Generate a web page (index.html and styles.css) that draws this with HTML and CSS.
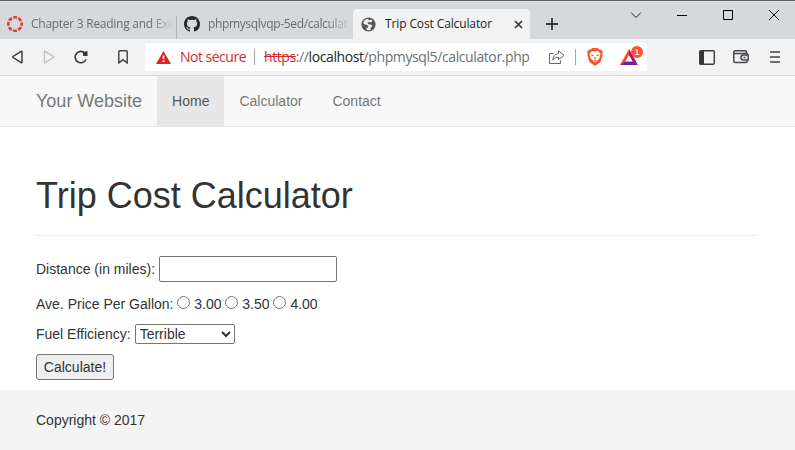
FILE: index.html
```html
<!DOCTYPE html>
<html lang="en">
<head>
<meta charset="utf-8">
<title>Trip Cost Calculator</title>
<link rel="stylesheet" href="styles.css">
</head>
<body>
<header class="browser">
  <div class="tabs">
    <div class="tab tab-first">
      <svg width="16" height="16" viewBox="0 0 16 16"><circle cx="8" cy="8" r="6.7" fill="none" stroke="#e33a32" stroke-width="2.5" stroke-dasharray="3.9 1.362" stroke-dashoffset="1.95"/></svg>
      <span class="tab-title fade t1">Chapter 3 Reading and Exe</span>
    </div>
    <div class="tab tab-second">
      <svg width="16" height="16" viewBox="0 0 16 16" fill="#24292e"><path d="M8 0C3.58 0 0 3.58 0 8c0 3.54 2.29 6.53 5.47 7.59.4.07.55-.17.55-.38 0-.19-.01-.82-.01-1.49-2.01.37-2.53-.49-2.69-.94-.09-.23-.48-.94-.82-1.13-.28-.15-.68-.52-.01-.53.63-.01 1.08.58 1.23.82.72 1.21 1.87.87 2.33.66.07-.52.28-.87.51-1.07-1.78-.2-3.64-.89-3.64-3.95 0-.87.31-1.59.82-2.15-.08-.2-.36-1.02.08-2.12 0 0 .67-.21 2.2.82.64-.18 1.32-.27 2-.27s1.36.09 2 .27c1.53-1.04 2.2-.82 2.2-.82.44 1.1.16 1.92.08 2.12.51.56.82 1.27.82 2.15 0 3.07-1.87 3.75-3.65 3.95.29.25.54.73.54 1.48 0 1.07-.01 1.93-.01 2.2 0 .21.15.46.55.38A8.01 8.01 0 0 0 16 8c0-4.42-3.58-8-8-8z"/></svg>
      <span class="tab-title fade t2">phpmysqlvqp-5ed/calculat</span>
    </div>
    <div class="tab tab-active">
      <svg width="15" height="15" viewBox="0 0 15 15"><circle cx="7.5" cy="7.5" r="7.1" fill="#55595e"/><path d="M7.200 1.800C5 2 3 3.300 2.200 5.400l1 1.900 2.700.4 1.600 1.600-.6 1.500-1.900.2 1.500 2.200c1.100.2 2.200 0 3.200-.5l-.4-1.600 2-1.800-.8-1.500-3-.6-1.200-1.300 1.600-.9 2.700.2.7-1.700-1.700-1.100-.8.900-1.200-.2Z" fill="#f2f2f2"/></svg>
      <span class="tab-title t3">Trip Cost Calculator</span>
      <svg class="tab-close" width="9" height="9" viewBox="0 0 9 9"><path d="m1 1 7 7M8 1 1 8" stroke="#33373b" stroke-width="1.7"/></svg>
    </div>
    <svg class="new-tab" width="12" height="12" viewBox="0 0 12 12"><path d="M6 0v12M0 6h12" stroke="#33373b" stroke-width="1.8"/></svg>
    <div class="window-buttons">
      <svg width="12" height="12" viewBox="0 0 12 12"><path d="m1 3.5 5 5 5-5" fill="none" stroke="#222"/></svg>
      <svg width="12" height="12" viewBox="0 0 12 12"><path d="M1 6.5h10" stroke="#000"/></svg>
      <svg width="12" height="12" viewBox="0 0 12 12"><path d="M1.500 1.500h9v9h-9z" fill="none" stroke="#000"/></svg>
      <svg width="12" height="12" viewBox="0 0 12 12"><path d="m1 1 10 10M11 1 1 11" stroke="#111"/></svg>
    </div>
  </div>

  <div class="toolbar">
    <div class="nav-icons">
      <svg width="14" height="14" viewBox="0 0 14 14"><path d="M10.200 1.300 2 6.500q-.8.500 0 1l8.200 5.200q.8.300.8-.6V1.900q0-.9-.8-.6Z" fill="none" stroke="#33373b" stroke-width="1.400"/></svg>
      <svg width="14" height="14" viewBox="0 0 14 14"><path d="M2.200 1.300 10.400 6.500q.8.500 0 1l-8.200 5.200q-.8.300-.8-.6V1.900q0-.9.8-.6Z" fill="none" stroke="#bdbfc1" stroke-width="1.400"/></svg>
      <svg width="14" height="14" viewBox="0 0 14 14"><path d="M11 3.200A5.700 5.700 0 1 0 12 9.500" fill="none" stroke="#33373b" stroke-width="1.600"/><path d="M9 2.300 13.500 1v5H9.200Z" fill="#33373b"/></svg>
      <svg width="14" height="14" viewBox="0 0 14 14"><path d="M1.800 1.600q0-.8.8-.8h6.800q.8 0 .8.800v11.300L6 9.800l-4.200 3.100Z" fill="none" stroke="#45494d" stroke-width="1.500"/></svg>
    </div>
    <div class="address">
      <svg class="warn" width="15" height="13" viewBox="0 0 15 13"><path d="M7.500 0 15 13H0Z" fill="#dc2626"/><path d="M6.700 4.500h1.600v3.500H6.700ZM6.700 9.300h1.600V11H6.700Z" fill="#fff"/></svg>
      <span class="security">Not secure</span>
      <span class="divider"></span>
      <span class="url"><span class="https">https</span>://<span class="host">localhost</span>/phpmysql5/calculator.php</span>
      <svg class="share" width="16" height="16" viewBox="0 0 16 16" fill="none" stroke="#666" stroke-width="1"><path d="M4.500 4.500h-4v10h11v-3"/><path d="M9.500 1.800 15 6.500l-5.500 4.200V8.200C6.800 8.100 5 9 3.800 11.200 4 7.500 5.800 4.900 9.500 4.500Z"/></svg>
      <span class="divider divider-share"></span>
      <svg class="brave" width="16" height="18" viewBox="0 0 16 18"><path d="M4 1.500 5.300 0h5.400L12 1.500l2-.1L16 4l-.7 2 .2 1.500-2 6.500L8 18l-5.500-4L.5 7.500.7 6 0 4l2-2.600Z" fill="#fb542b"/><path d="m5 3 3 .6L11 3l2.600 3-.8 2.200.2 1-2 2.500L8 14.500l-3-2.800-2-2.500.2-1L2.400 6Z" fill="#fff"/><path d="m4 6.300 2.700.7-.7 1.300-1.700-.8ZM12 6.300l-2.700.7.7 1.300 1.700-.8ZM6.300 9.800 8 9.200l1.700.6L8 11ZM6.300 12.200l1.700-.6 1.700.6L8 13.300Z" fill="#fb542b"/></svg>
      <span class="rewards">
        <svg width="18" height="16" viewBox="0 0 18 16"><path d="M9 0 0 16l5-3 4-7Z" fill="#ff4a2c"/><path d="m9 0 9 16-5-3-4-7Z" fill="#a3127d"/><path d="M0 16h18l-5-3.500H5Z" fill="#6c24a1"/></svg>
        <span class="badge">1</span>
      </span>
    </div>
    <div class="side-icons">
      <svg width="16" height="15" viewBox="0 0 16 15"><rect x=".7" y=".7" width="14.600" height="13.600" rx="1" fill="none" stroke="#3b3f43" stroke-width="1.400"/><path d="M1 1h4v13H1Z" fill="#33373b"/></svg>
      <svg width="16" height="14" viewBox="0 0 16 14" fill="none" stroke="#45494d" stroke-width="1.500"><path d="M14.200 5V3.600H2.500Q.8 3.500.8 2.200T2.500.8h9.700q1.200 0 1.200 1v1.400M.8 2v9q0 1.500 1.700 1.500h10.200q1.500 0 1.500-1.500v-1"/><path d="M15.200 5H10.500a2.500 2.500 0 0 0 0 5h4.700ZM10.500 7.500h2"/></svg>
      <svg width="10" height="12" viewBox="0 0 10 12"><path d="M0 1h10M0 6h10M0 11h10" stroke="#44484c" stroke-width="1.700"/></svg>
    </div>
  </div>
</header>

<nav class="navbar">
  <a class="brand">Your Website</a>
  <a class="nav-link current">Home</a>
  <a class="nav-link">Calculator</a>
  <a class="nav-link">Contact</a>
</nav>

<main class="content">
  <h1>Trip Cost Calculator</h1>
  <form>
    <p class="row distance"><label for="distance">Distance (in miles):</label><input id="distance" type="text"></p>
    <p class="row price"><span>Ave. Price Per Gallon:</span>
      <label><input type="radio" name="price"><span>3.00</span></label>
      <label><input type="radio" name="price"><span>3.50</span></label>
      <label><input type="radio" name="price"><span>4.00</span></label>
    </p>
    <p class="row efficiency"><label for="eff">Fuel Efficiency:</label><select id="eff"><option>Terrible</option></select></p>
    <button type="button">Calculate!</button>
  </form>
</main>
<footer>Copyright © 2017</footer>
</body>
</html>
```
FILE: styles.css
```css
* { box-sizing: border-box; }
body {
  margin: 0;
  height: 450px;
  display: flex;
  flex-direction: column;
  overflow: hidden;
  background: #fff;
  color: #333;
  font: 14px/20px "Liberation Sans", Arial, sans-serif;
}
svg { display: block; flex: none; }

/* Browser frame */
.browser { font-family: "Open Sans", "Noto Sans", sans-serif; height: 76px; flex: none; }
.tabs {
  height: 39px;
  display: flex;
  align-items: flex-end;
  background: #d5d9dc;
  border-top: 1px solid #606266;
}
.tab { display: flex; align-items: center; height: 30px; gap: 8px; color: #686d73; font-size: 12px; }
.tab-title { white-space: nowrap; line-height: 18px; }
.fade { mask-image: linear-gradient(to right, #000 calc(100% - 24px), transparent); }
.tab-first { width: 177px; height: 23px; padding: 0 0 7px 7px; border-right: 1px solid #aeb2b5; }
.tab-second { width: 176px; height: 23px; padding: 0 0 7px 7px; }
.t1 { width: 143px; letter-spacing: -.27px; }
.t2 { width: 143px; letter-spacing: -.34px; }
.tab-active { width: 177px; padding: 0 0 0 8px; border-radius: 4px 4px 0 0; background: #f2f2f2; color: #202428; gap: 9px; }
.t3 { width: 120px; letter-spacing: -.12px; }
.new-tab { margin: 0 0 9px 16px; }
.window-buttons { margin-left: auto; margin-right: 15px; display: flex; gap: 34px; align-self: flex-start; padding-top: 8px; }
.toolbar {
  height: 37px;
  display: flex;
  align-items: center;
  background: #f2f2f2;
  border-bottom: 1px solid #d3d6d9;
}
.nav-icons { display: grid; grid-template-columns: 32px 31px 43px 28px; width: 134px; margin-left: 11px; }
.address { width: 502px; height: 28px; display: flex; align-items: center; padding-left: 11px; border-radius: 3px; background: #fff; font-size: 14px; }
.security { width: 66px; margin-left: 9px; color: #d72a2a; white-space: nowrap; letter-spacing: -.5px; }
.divider { width: 1px; height: 16px; margin-left: 8px; background: #a3a5a8; }
.url { width: 275px; margin-left: 9px; white-space: nowrap; color: #6b7075; letter-spacing: -.4px; }
.https { color: #d72a2a; text-decoration: line-through; }
.host { color: #24282c; }
.share { margin-left: 10px; }
.divider-share { margin-left: 10px; }
.brave { margin-left: 11px; }
.rewards { position: relative; margin-left: 17px; }
.badge {
  position: absolute;
  left: 11px;
  top: -3px;
  width: 12px;
  height: 12px;
  border-radius: 50%;
  background: #fb542b;
  color: #fff;
  font-family: "Liberation Sans", sans-serif;
  font-size: 9px;
  line-height: 12px;
  text-align: center;
}
.side-icons { display: flex; align-items: center; margin-left: 52px; }
.side-icons svg + svg { margin-left: 18px; }
.side-icons svg:last-child { margin-left: 21px; }

/* Site navigation */
.navbar { height: 51px; flex: none; display: flex; padding-left: 21px; background: #f8f8f8; border-bottom: 1px solid #e7e7e7; color: #777; }
.brand { padding: 15px; font-size: 18px; }
.nav-link { padding: 15px; }
.current { background: #e7e7e7; color: #555; }

/* Calculator */
.content { flex: 1; padding: 49px 39px 0 36px; }
h1 { margin: 0 0 20px; padding-bottom: 19px; border-bottom: 1px solid #eee; font-size: 36px; font-weight: 400; line-height: 40px; }
.row { display: flex; align-items: center; margin: 0 0 10px; height: 20px; }
.distance { height: 26px; margin-bottom: 12px; }
#distance { width: 178px; height: 26px; margin: 0 0 0 4px; border: 1px solid #767676; border-radius: 2px; }
.price label { display: flex; align-items: center; }
.price input { width: 13px; height: 13px; margin: -3px 4px 0 3.8px; }
select { width: 100px; height: 20px; margin-left: 4px; padding: 0; border: 1px solid #767676; border-radius: 2px; background: #fff; color: #333; font: inherit; }
button { display: block; width: 78px; height: 26px; padding: 0; border: 1px solid #767676; border-radius: 3px; background: #efefef; color: #333; font: inherit; }
footer { height: 60px; flex: none; padding: 20px 36px; background: #f4f4f4; }
```
